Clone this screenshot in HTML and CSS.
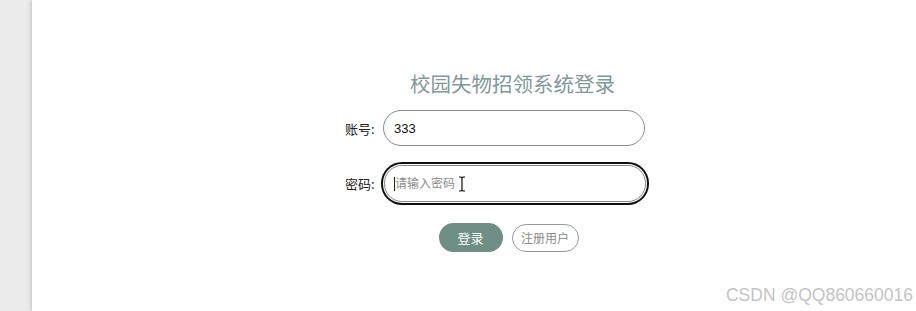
FILE: index.html
```html
<!DOCTYPE html>
<html lang="zh-CN">
<head>
    <meta charset="UTF-8">
    <meta name="viewport" content="width=device-width, initial-scale=1.0">
    <title>校园失物招领系统登录</title>
    <link rel="stylesheet" href="styles.css">
</head>
<body>
    <div class="side"></div>

    <div class="page">
        <div class="login">
            <h2>校园失物招领系统登录</h2>

            <form class="login-form">
                <div class="form-row">
                    <label for="account">账号:</label>
                    <input type="text" id="account" class="field" value="333">
                </div>

                <div class="form-row">
                    <label for="password">密码:</label>
                    <div class="field-wrap">
                        <input type="password" id="password" class="field field-focus" placeholder="请输入密码">
                        <span class="caret"></span>
                        <svg class="ibeam" width="8" height="16" viewBox="0 0 8 16">
                            <path d="M1 1h2l1 1 1-1h2M4 2v12M1 15h2l1-1 1 1h2" fill="none" stroke="#111" stroke-width="1.2"/>
                        </svg>
                    </div>
                </div>

                <div class="actions">
                    <button type="button" class="btn btn-login">登录</button>
                    <button type="button" class="btn btn-register">注册用户</button>
                </div>
            </form>
        </div>

        <div class="watermark">CSDN @QQ860660016</div>
    </div>
</body>
</html>
```

FILE: styles.css
```css
* {
    margin: 0;
    padding: 0;
    box-sizing: border-box;
}

body {
    display: flex;
    height: 311px;
    overflow: hidden;
    font-family: "Liberation Sans", "Noto Sans CJK SC", sans-serif;
    background: #ebebeb;
    color: #333;
}

.side {
    width: 32px;
    flex-shrink: 0;
}

/* Main white panel */
.page {
    position: relative;
    flex: 1;
    background: #fff;
    box-shadow: -2px 0 3px rgba(0, 0, 0, 0.12);
}

.login {
    width: 335px;
    margin-left: 313px;
    padding-top: 70px;
}

.login h2 {
    text-align: center;
    font-family: "Noto Sans CJK SC", sans-serif;
    font-size: 20.5px;
    font-weight: normal;
    line-height: 26px;
    color: #7f999a;
    margin-bottom: 14px;
}

/* Form */
.form-row {
    display: flex;
    align-items: center;
    margin-bottom: 19px;
}

.form-row label {
    width: 38px;
    font-family: "Noto Sans CJK SC", sans-serif;
    font-size: 13px;
    color: #222;
}

.field-wrap {
    position: relative;
}

.field {
    width: 262px;
    height: 36px;
    padding: 0 10px;
    font-family: "Liberation Sans", "Noto Sans CJK SC", sans-serif;
    font-size: 13px;
    color: #111;
    border: 1px solid #8a8a8a;
    border-radius: 18px;
    outline: none;
}

.field::placeholder {
    font-family: "Noto Sans CJK SC", sans-serif;
    font-size: 12px;
    color: #8c8c8c;
}

.field-focus {
    margin-left: 1px;
    height: 37px;
    box-shadow: 0 0 0 1px #fff, 0 0 0 3px #111;
}

.caret {
    position: absolute;
    left: 11px;
    top: 12px;
    width: 1px;
    height: 14px;
    background: #222;
}

.ibeam {
    position: absolute;
    left: 75px;
    top: 11px;
}

/* Buttons */
.actions {
    display: flex;
    justify-content: center;
    align-items: center;
    gap: 9px;
    margin-top: 21px;
    padding-right: 8px;
}

.btn {
    height: 29px;
    border-radius: 15px;
    font-family: "Noto Sans CJK SC", sans-serif;
    cursor: pointer;
}

.btn-login {
    width: 64px;
    background: #6f8f86;
    color: #fff;
    border: none;
    font-size: 13px;
}

.btn-register {
    width: 67px;
    height: 28px;
    background: #fff;
    color: #8a8a8a;
    border: 1px solid #999;
    font-size: 12px;
}

.watermark {
    position: absolute;
    right: 3px;
    bottom: 5px;
    font-family: "Liberation Sans", sans-serif;
    font-size: 17.5px;
    color: #c4c4c4;
}
```
